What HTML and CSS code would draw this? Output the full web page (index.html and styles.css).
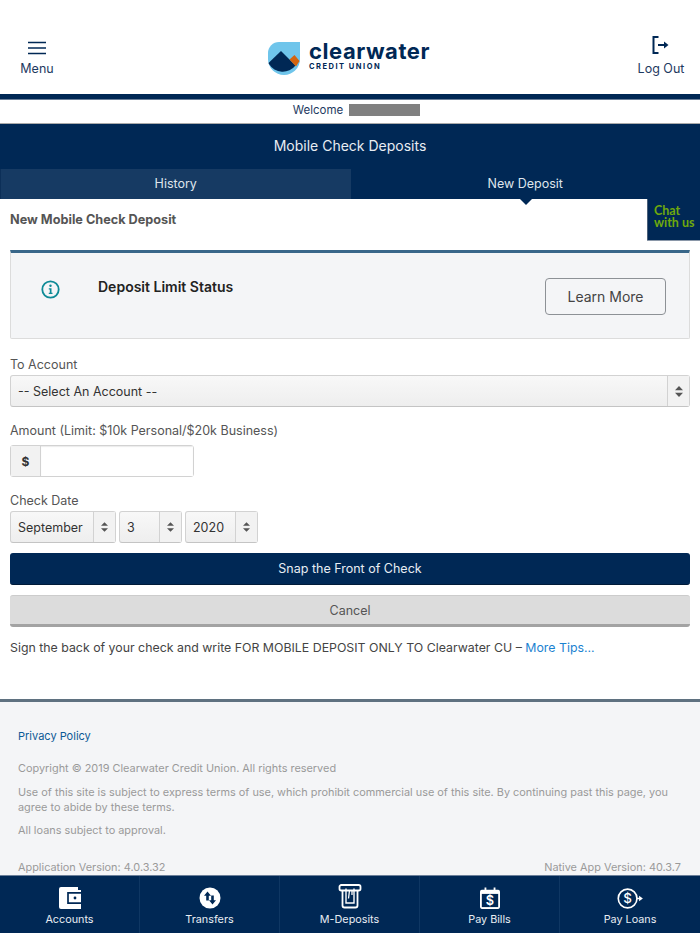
FILE: index.html
```html
<!DOCTYPE html>
<html lang="en">
<head>
<meta charset="utf-8">
<title>Mobile Check Deposits</title>
<link rel="stylesheet" href="styles.css">
</head>
<body>
<div class="app">
  <header class="topbar">
    <a class="top-action">
      <svg class="top-icon" width="20" height="14" viewBox="0 0 20 14"><path d="M1 1.5h18M1 7h18M1 12.500h18" stroke="#002855" stroke-width="1.700" fill="none"/></svg>
      <span>Menu</span>
    </a>
    <div class="logo">
      <svg width="34" height="34" viewBox="0 0 34 34">
        <path d="M12 1H33V18A16 16 0 0 1 1 18V12A11 11 0 0 1 12 1Z" fill="#6fc5eb"/>
        <path d="M1.500 22L14 10L28.500 24.500A16 16 0 0 1 2 23Z" fill="#002855"/>
        <path d="M22.500 18.500L27.500 14L32.500 20L29 25.500Z" fill="#d4640f"/>
      </svg>
      <div class="logo-text">
        <div class="logo-name">clearwater</div>
        <div class="logo-sub">CREDIT UNION</div>
      </div>
    </div>
    <a class="top-action">
      <svg class="top-icon" width="20" height="20" viewBox="0 0 20 20"><path d="M7.500 2H2.500V18H7.500" stroke="#002855" stroke-width="2" fill="none"/><path d="M7 10H15.500" stroke="#002855" stroke-width="2" fill="none"/><path d="M13 6.500L17.500 10L13 13.500Z" fill="#002855"/></svg>
      <span>Log Out</span>
    </a>
  </header>
  <div class="welcome"><span>Welcome</span><span class="redacted"></span></div>
  <div class="page-title">Mobile Check Deposits</div>
  <nav class="tabs">
    <div class="tab tab-inactive">History</div>
    <div class="tab tab-active">New Deposit</div>
  </nav>
  <div class="chat">Chat<br>with us</div>
  <main class="content">
    <h2 class="section-title">New Mobile Check Deposit</h2>
    <section class="notice">
      <svg class="notice-icon" width="19" height="19" viewBox="0 0 19 19"><circle cx="9.500" cy="9.500" r="8.200" stroke="#0e8a96" stroke-width="1.800" fill="none"/><circle cx="9.500" cy="5.800" r="1.200" fill="#0e8a96"/><path d="M7.800 8.300H10.500V12.800H11.500V14H7.800V12.800H8.800V9.500H7.800Z" fill="#0e8a96"/></svg>
      <div class="notice-title">Deposit Limit Status</div>
      <button class="learn">Learn More</button>
    </section>
    <label class="field-label label-account">To Account</label>
    <div class="select select-full">
      <span class="select-value">-- Select An Account --</span>
      <span class="select-arrows"><svg width="8" height="11" viewBox="0 0 8 11"><path d="M4 0L8 4.200H0ZM4 11L0 6.800H8Z" fill="#555"/></svg></span>
    </div>
    <label class="field-label label-amount">Amount (Limit: $10k Personal/$20k Business)</label>
    <div class="amount">
      <span class="amount-addon">$</span>
      <span class="amount-input"></span>
    </div>
    <label class="field-label label-date">Check Date</label>
    <div class="date-row">
      <div class="select select-month"><span class="select-value">September</span><span class="select-arrows"><svg width="7" height="10" viewBox="0 0 8 11"><path d="M4 0L8 4.200H0ZM4 11L0 6.800H8Z" fill="#555"/></svg></span></div>
      <div class="select select-day"><span class="select-value">3</span><span class="select-arrows"><svg width="7" height="10" viewBox="0 0 8 11"><path d="M4 0L8 4.200H0ZM4 11L0 6.800H8Z" fill="#555"/></svg></span></div>
      <div class="select select-year"><span class="select-value">2020</span><span class="select-arrows"><svg width="7" height="10" viewBox="0 0 8 11"><path d="M4 0L8 4.200H0ZM4 11L0 6.800H8Z" fill="#555"/></svg></span></div>
    </div>
    <button class="btn btn-primary">Snap the Front of Check</button>
    <button class="btn btn-cancel">Cancel</button>
    <p class="tips">Sign the back of your check and write FOR MOBILE DEPOSIT ONLY TO Clearwater CU – <a class="tips-link">More Tips...</a></p>
  </main>
  <footer class="footer">
    <a class="privacy">Privacy Policy</a>
    <p class="legal legal-first">Copyright © 2019 Clearwater Credit Union. All rights reserved</p>
    <p class="legal legal-terms">Use of this site is subject to express terms of use, which prohibit commercial use of this site. By continuing past this page, you agree to abide by these terms.</p>
    <p class="legal legal-loans">All loans subject to approval.</p>
    <div class="versions"><span>Application Version: 4.0.3.32</span><span>Native App Version: 40.3.7</span></div>
  </footer>
  <nav class="tabbar">
    <a class="tabbar-item">
      <svg width="22" height="22" viewBox="0 0 22 22"><path d="M2 0H19V3H22V22H2A2 2 0 0 1 0 20V2A2 2 0 0 1 2 0Z" fill="#fff"/><path d="M22 5.800H9V16.200H22" stroke="#002855" stroke-width="1.700" fill="none"/><circle cx="16" cy="11" r="1.400" fill="#002855"/></svg>
      <span>Accounts</span>
    </a>
    <a class="tabbar-item">
      <svg width="22" height="22" viewBox="0 0 22 22"><circle cx="11" cy="11" r="10.500" fill="#fff"/><path d="M8.500 4.500L12 8.800H9.800V13.500H7.200V8.800H5Z" fill="#002855"/><path d="M13.500 17.500L10 13.200H12.200V8.500H14.800V13.200H17Z" fill="#002855"/></svg>
      <span>Transfers</span>
    </a>
    <a class="tabbar-item">
      <svg width="24" height="25" viewBox="0 0 24 25"><rect x="1.500" y="1" width="21" height="5.500" rx="1.800" stroke="#fff" stroke-width="1.800" fill="none"/><path d="M4.500 6V21.500A2 2 0 0 0 6.500 23.500H17.500A2 2 0 0 0 19.500 21.500V6" stroke="#fff" stroke-width="1.800" fill="none"/><path d="M8 4.500V19H16V4.500" stroke="#fff" stroke-width="1.400" fill="none"/><path d="M10.500 14.500L11.500 6.500M14 6.500V11" stroke="#fff" stroke-width="1.300" fill="none"/></svg>
      <span>M-Deposits</span>
    </a>
    <a class="tabbar-item">
      <svg width="20" height="22" viewBox="0 0 22 24"><path d="M5 0.500H7V3H15V0.500H17V3H20A2 2 0 0 1 22 5V22A2 2 0 0 1 20 24H2A2 2 0 0 1 0 22V5A2 2 0 0 1 2 3H5Z" fill="#fff"/><rect x="2" y="7.500" width="18" height="14.500" fill="#002855"/><text x="11" y="20" class="bill-dollar">$</text></svg>
      <span>Pay Bills</span>
    </a>
    <a class="tabbar-item">
      <svg width="26" height="21" viewBox="0 0 27 22"><circle cx="11" cy="11" r="9.800" stroke="#fff" stroke-width="1.700" fill="none"/><circle cx="11" cy="11" r="7" stroke="#002855" fill="none"/><text x="11" y="16" class="loan-dollar">$</text><path d="M20.500 11H24" stroke="#fff" stroke-width="1.500"/><path d="M23 8L27 11L23 14Z" fill="#fff"/></svg>
      <span>Pay Loans</span>
    </a>
  </nav>
</div>
</body>
</html>
```
FILE: styles.css
```css
* { box-sizing: border-box; }
html, body { margin: 0; padding: 0; }
body { font-family: Inter, "Liberation Sans", sans-serif; color: #333; background: #fff; }
.app { position: relative; width: 700px; height: 933px; overflow: hidden; display: flex; flex-direction: column; }

.topbar { height: 99px; flex: none; display: flex; justify-content: space-between; align-items: flex-start; padding: 34px 14px 0 12px; border-bottom: 5px solid #002855; box-shadow: 0 1px 0 #6b7f99; }
.top-action { width: 50px; display: flex; flex-direction: column; align-items: center; justify-content: flex-end; height: 43px; color: #1e3a61; font-size: 12.500px; line-height: 16px; gap: 6px; }
.top-icon { flex: none; }
.logo { display: flex; align-items: flex-start; gap: 8px; margin: 7px 0 0 -1px; }
.logo-text { display: flex; flex-direction: column; color: #002855; }
.logo-name { font-weight: 700; font-size: 22px; line-height: 22px; letter-spacing: 0.55px; margin-top: -1px; }
.logo-sub { font-weight: 700; font-size: 7.500px; line-height: 9px; letter-spacing: 1.500px; }

.welcome { height: 25px; flex: none; display: flex; justify-content: center; align-items: center; gap: 6px; font-size: 11.500px; color: #1e3a61; border-bottom: 1px solid #aaa; padding-left: 13px; padding-bottom: 3px; }
.redacted { width: 71px; height: 12px; background: #808080; }

.page-title { height: 45px; flex: none; background: #002855; color: #e8edf3; font-size: 14px; display: flex; align-items: center; justify-content: center; padding-bottom: 2px; }
.tabs { height: 30px; flex: none; display: flex; background: #002855; }
.tab { flex: 1; display: flex; align-items: center; justify-content: center; font-size: 12.500px; color: #dfe5ec; padding-bottom: 2px; }
.tab-inactive { background: #163a63; border-left: 1px solid #0c2f58; }
.tab-active { position: relative; }
.tab-active::after { content: ""; position: absolute; left: 169px; bottom: -6px; border-left: 6px solid transparent; border-right: 6px solid transparent; border-top: 6px solid #002855; }

.chat { position: absolute; top: 199px; left: 647px; width: 53px; height: 41px; background: #002855; border-left: 1px solid #4a5f78; box-shadow: 0 1px 0 #8a97a8; padding: 6px 0 0 6px; font-family: Lato, Inter, sans-serif; font-weight: 700; font-size: 12.500px; line-height: 12px; color: #6fa80c; }

.content { flex: none; height: 500px; padding: 0 10px; }
.section-title { margin: 0; padding-top: 13px; height: 51px; font-size: 12.700px; line-height: 15px; font-weight: 700; color: #555; }
.notice { height: 89px; display: flex; align-items: flex-start; background: #f4f5f7; border: 1px solid #dcdcdc; border-top: 3px solid #39678a; border-radius: 0 0 2px 2px; position: relative; }
.notice-icon { margin: 27px 0 0 30px; flex: none; }
.notice-title { margin: 25px 0 0 38px; font-weight: 600; font-size: 14px; line-height: 17px; color: #222; flex: 1; }
.learn { margin: 25px 23px 0 0; width: 121px; height: 37px; background: transparent; border: 1.500px solid #8d9196; border-radius: 4px; font-family: inherit; font-size: 14px; color: #444; padding: 0; }

.field-label { display: block; font-size: 12.500px; line-height: 16px; color: #555; }
.label-account { margin-top: 18px; }
.label-amount { margin-top: 16px; }
.label-date { margin-top: 16px; }

.select { display: flex; align-items: stretch; height: 32px; background: linear-gradient(#f8f8f8, #eee); border: 1px solid #d2d2d2; border-bottom-color: #c4c4c4; border-radius: 3px; font-size: 12.500px; color: #333; }
.select-value { flex: 1; display: flex; align-items: center; padding-left: 7px; }
.select-arrows { flex: none; width: 22px; display: flex; align-items: center; justify-content: center; border-left: 1px solid #d2d2d2; background: #f2f2f2; }
.select-full { margin-top: 2px; }
.amount { display: flex; width: 184px; height: 32px; margin-top: 6px; border: 1px solid #d2d2d2; border-radius: 3px; }
.amount-addon { width: 30px; flex: none; display: flex; align-items: center; justify-content: center; background: #f2f2f2; border-right: 1px solid #d2d2d2; font-size: 12px; font-weight: 700; color: #333; }
.amount-input { flex: 1; background: #fff; box-shadow: inset 0 1px 1px rgba(0,0,0,.08); }
.date-row { display: flex; gap: 3px; margin-top: 2px; }
.select-month { width: 106px; }
.select-day { width: 63px; }
.select-year { width: 73px; }

.btn { display: block; width: 100%; font-family: inherit; font-size: 12.500px; border: 0; padding: 0; border-radius: 3px; }
.btn-primary { height: 32px; margin-top: 10px; background: #002855; color: #e8edf3; border-bottom: 1px solid #001a38; }
.btn-cancel { height: 32px; margin-top: 10px; background: #dcdcdc; color: #555; border-top: 1px solid #ccc; border-bottom: 3px solid #a3a3a3; }
.tips { margin: 12px 0 0; font-size: 12.350px; line-height: 17px; color: #444; white-space: nowrap; }
.tips-link { color: #1b82d1; }

.footer { flex: 1; min-height: 0; background: #f4f5f7; border-top: 3px solid #5f7180; padding: 27px 18px 0; display: flex; flex-direction: column; font-size: 10.900px; line-height: 16px; color: #9a9a9a; }
.privacy { color: #0c5a96; font-size: 11px; line-height: 14px; }
.legal { margin: 0; }
.legal-first { margin-top: 17px; }
.legal-terms { margin-top: 9px; line-height: 15px; }
.legal-loans { margin-top: 7px; }
.versions { display: flex; justify-content: space-between; padding-right: 1px; margin-top: 21px; }

.tabbar { height: 58px; flex: none; display: grid; grid-template-columns: repeat(5, 1fr); background: #002855; border-top: 1px solid #6b7f99; }
.tabbar-item { display: flex; flex-direction: column; align-items: center; justify-content: flex-end; padding-bottom: 6px; gap: 4px; font-size: 10.800px; line-height: 14px; color: #e8edf3; border-right: 1px solid #0f3763; }
.tabbar-item:last-child { border-right: 0; }
.bill-dollar { font-size: 14px; font-weight: 600; fill: #fff; text-anchor: middle; }
.loan-dollar { font-size: 14px; font-weight: 500; fill: #fff; text-anchor: middle; }
```
